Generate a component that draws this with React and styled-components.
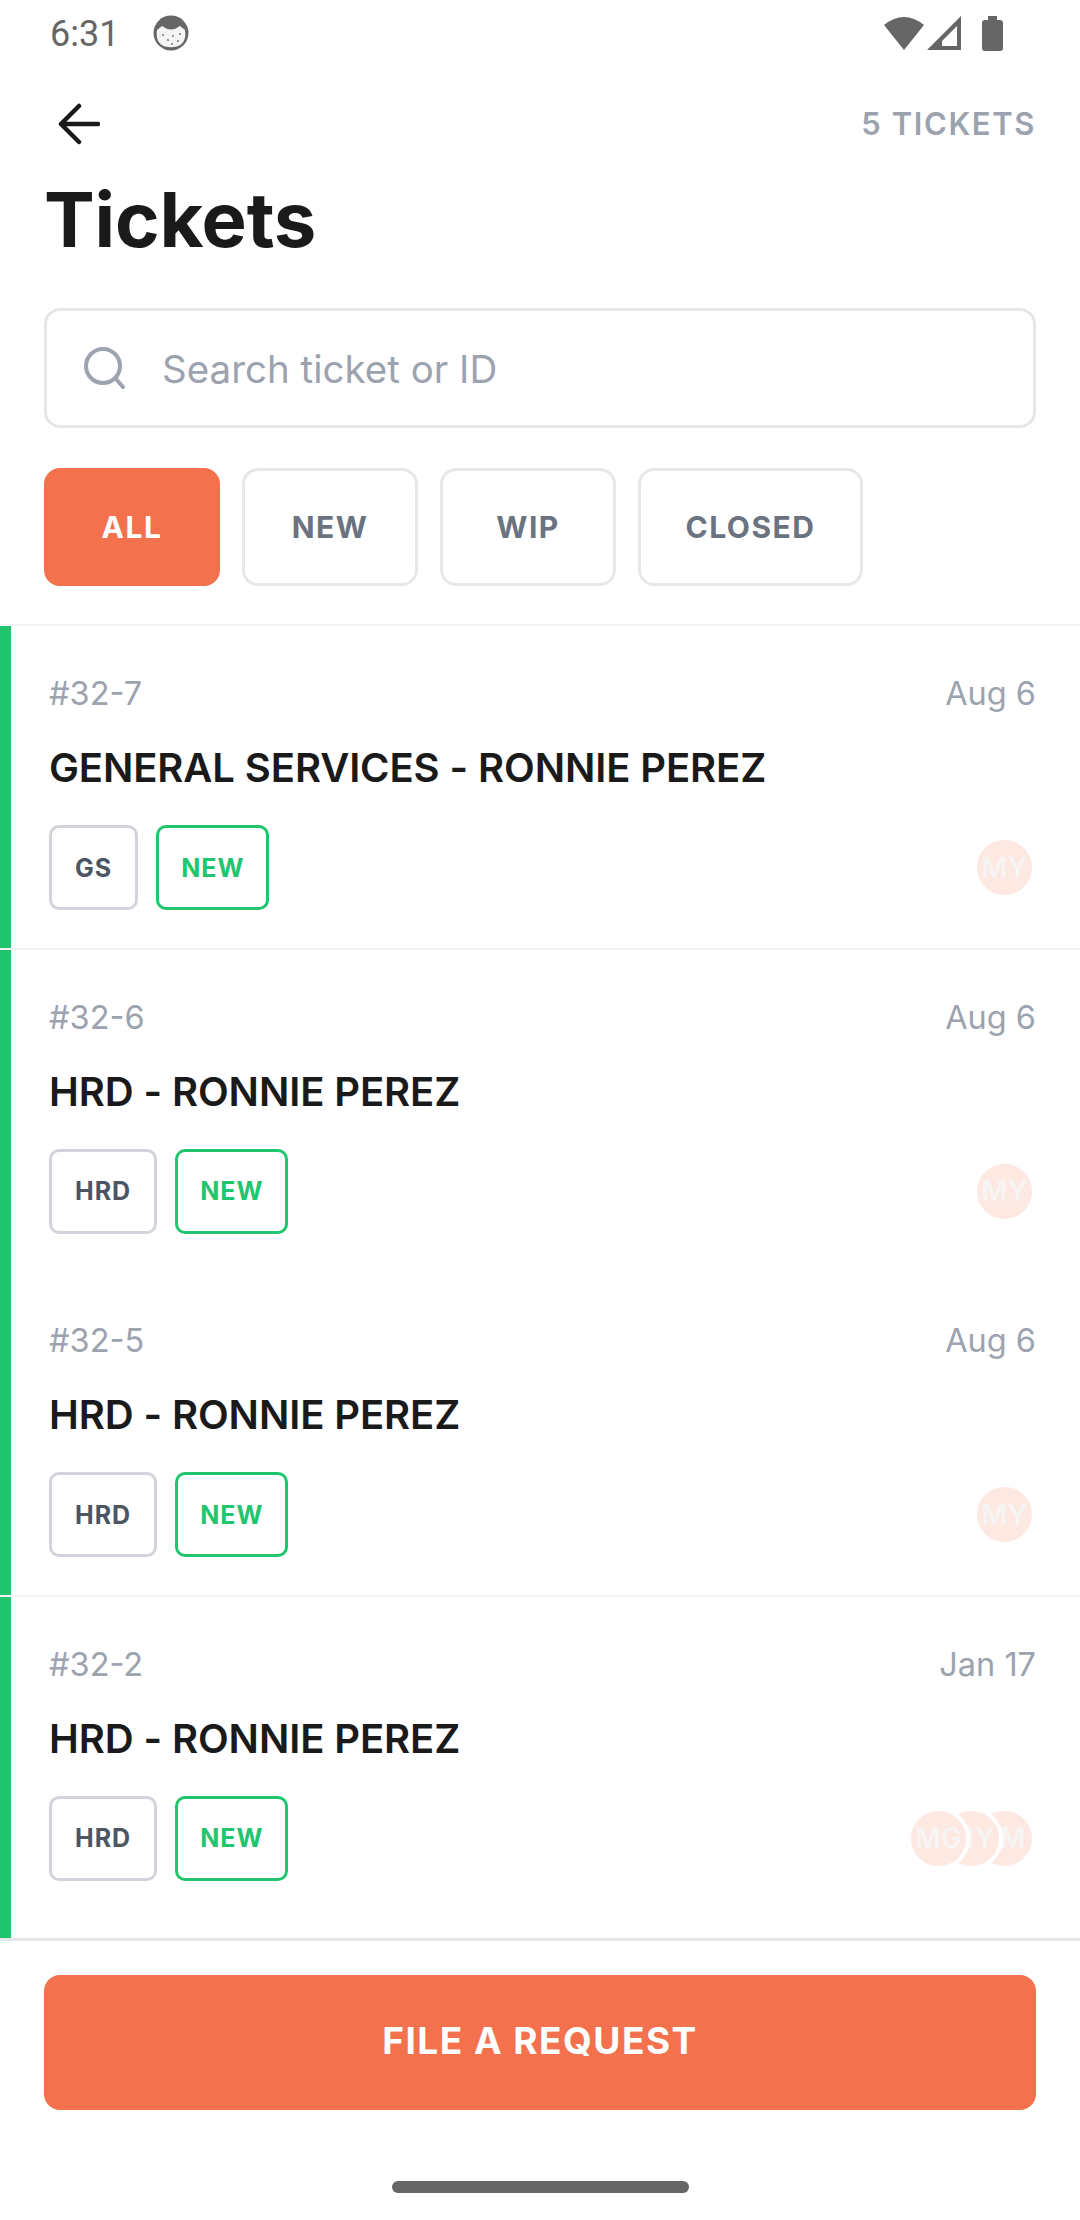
import React from "react";
import styled, { createGlobalStyle } from "styled-components";

const ORANGE = "#f3714d";
const GREEN = "#20c56d";

const tickets = [
  { id: "#32-7", date: "Aug 6", title: "GENERAL SERVICES - RONNIE PEREZ", dept: "GS", people: ["MY"] },
  { id: "#32-6", date: "Aug 6", title: "HRD - RONNIE PEREZ", dept: "HRD", people: ["MY"], divider: true },
  { id: "#32-5", date: "Aug 6", title: "HRD - RONNIE PEREZ", dept: "HRD", people: ["MY"] },
  { id: "#32-2", date: "Jan 17", title: "HRD - RONNIE PEREZ", dept: "HRD", people: ["MG", "MY", "JM"], divider: true },
];

export default function App() {
  return (
    <Page>
      <GlobalStyle />
      <StatusBar>
        <Time>6:31</Time>
        <svg width="36" height="36" viewBox="0 0 36 36">
          <circle cx="18" cy="18" r="17.5" fill="#666" />
          <path d="M4 15 L9 11 Q18 18 27 11 L32 15 Q34 28 24 31.5 Q18 33 12 31.5 Q2 28 4 15Z" fill="#f4f4f4" />
          <g fill="#777">
            <circle cx="10" cy="20" r="1" />
            <circle cx="15" cy="25" r="1" />
            <circle cx="20" cy="21" r="1" />
            <circle cx="25" cy="26" r="1" />
            <circle cx="27" cy="19" r="1" />
            <circle cx="19" cy="29" r="1" />
          </g>
        </svg>
        <StatusIcons>
          <svg width="40" height="36" viewBox="0 0 40 36">
            <path d="M0 10 Q20 -6 40 10 L20 35Z" fill="#666" />
          </svg>
          <svg width="35" height="36" viewBox="0 0 35 36">
            <path fillRule="evenodd" d="M0 35 L34 1 V35Z M15 31 H30 V11 L15 26Z" fill="#666" />
          </svg>
          <Battery />
        </StatusIcons>
      </StatusBar>

      <Header>
        <svg width="44" height="44" viewBox="0 0 44 44" fill="none" stroke="#1a1a1a" strokeWidth="4.5" strokeLinecap="round" strokeLinejoin="round">
          <path d="M42 22 H5 M23 4 L5 22 L23 40" />
        </svg>
        <Count>5 TICKETS</Count>
      </Header>
      <Title>Tickets</Title>

      <SearchBox>
        <svg width="42" height="42" viewBox="0 0 42 42" fill="none" stroke="#9ca3af" strokeWidth="4" strokeLinecap="round">
          <circle cx="19" cy="19" r="17" />
          <path d="M32 32 L39 40" />
        </svg>
        <Placeholder>Search ticket or ID</Placeholder>
      </SearchBox>

      <Filters>
        <Filter $active>ALL</Filter>
        <Filter>NEW</Filter>
        <Filter>WIP</Filter>
        <Filter $wide>CLOSED</Filter>
      </Filters>

      <List>
        {tickets.map((t, i) => (
          <Row key={t.id} $divider={i === 0 || t.divider}>
            <RowBody $divider={i === 0 || t.divider}>
              <Meta>
                <span>{t.id}</span>
                <span>{t.date}</span>
              </Meta>
              <RowTitle>{t.title}</RowTitle>
              <TagRow>
                <Tag>{t.dept}</Tag>
                <Tag $status>NEW</Tag>
                <Avatars>
                  {t.people.map((p, n) => (
                    <Avatar key={p} $z={t.people.length - n}>
                      <span>{p}</span>
                    </Avatar>
                  ))}
                </Avatars>
              </TagRow>
            </RowBody>
          </Row>
        ))}
      </List>

      <Footer>
        <RequestButton>FILE A REQUEST</RequestButton>
        <HomeBar />
      </Footer>
    </Page>
  );
}

const GlobalStyle = createGlobalStyle`
  html, body {
    margin: 0;
    padding: 0;
    background: #fff;
  }
  * {
    box-sizing: border-box;
  }
`;

const Page = styled.div`
  width: 1080px;
  height: 2220px;
  overflow: hidden;
  background: #fff;
  display: flex;
  flex-direction: column;
  font-family: Inter, "Liberation Sans", sans-serif;
`;

const StatusBar = styled.div`
  height: 66px;
  padding: 15px 77px 15px 50px;
  display: flex;
  align-items: center;
  gap: 34px;
`;

const Time = styled.div`
  font-family: Roboto, sans-serif;
  font-size: 36px;
  line-height: 38px;
  padding-top: 2px;
  color: #666;
`;

const StatusIcons = styled.div`
  margin-left: auto;
  display: flex;
  align-items: center;
  gap: 3px;
`;

const Battery = styled.div`
  width: 21px;
  height: 31px;
  margin: 4px 0 0 17px;
  background: #666;
  border-radius: 3px;
  position: relative;

  &::before {
    content: "";
    position: absolute;
    top: -4px;
    left: 6px;
    width: 9px;
    height: 4px;
    background: #666;
  }
`;

const Header = styled.div`
  margin-top: 36px;
  padding: 0 44px 0 56px;
  height: 44px;
  display: flex;
  justify-content: space-between;
  align-items: center;
`;

const Count = styled.div`
  font-size: 31px;
  font-weight: 600;
  letter-spacing: 1.6px;
  padding-bottom: 2px;
  color: #9ca3af;
`;

const Title = styled.h1`
  margin: 33px 0 0;
  padding: 0 44px;
  font-size: 76px;
  line-height: 80px;
  font-weight: 700;
  letter-spacing: -0.2px;
  color: #1a1a1a;
`;

const SearchBox = styled.div`
  margin: 49px 44px 0;
  height: 120px;
  border: 3px solid #e5e7eb;
  border-radius: 16px;
  padding: 0 37px;
  display: flex;
  align-items: center;
  gap: 36px;
`;

const Placeholder = styled.div`
  font-size: 38.5px;
  padding-top: 2px;
  color: #9ca3af;
`;

const Filters = styled.div`
  margin: 40px 44px 38px;
  display: flex;
  gap: 22px;
`;

const Filter = styled.div`
  width: ${(p) => (p.$wide ? "225px" : "176px")};
  height: 118px;
  border-radius: 16px;
  border: 3px solid ${(p) => (p.$active ? ORANGE : "#e5e7eb")};
  background: ${(p) => (p.$active ? ORANGE : "#fff")};
  color: ${(p) => (p.$active ? "#fff" : "#6b7280")};
  font-size: 30px;
  font-weight: 700;
  letter-spacing: 1.5px;
  display: flex;
  align-items: center;
  justify-content: center;
`;

const List = styled.div`
  flex: 1;
  min-height: 0;
  overflow: hidden;
`;

const Row = styled.div`
  height: 323.5px;
  border-top: ${(p) => (p.$divider ? "2px solid #f3f4f6" : "none")};

  &:last-child {
    height: 343px;
  }
`;

const RowBody = styled.div`
  height: 100%;
  border-left: 11px solid ${GREEN};
  padding: ${(p) => (p.$divider ? "46px" : "48px")} 44px 0 38px;
`;

const Meta = styled.div`
  display: flex;
  justify-content: space-between;
  font-size: 32.5px;
  line-height: 44px;
  color: #9ca3af;
`;

const RowTitle = styled.div`
  margin-top: 28px;
  font-size: 40px;
  line-height: 48px;
  font-weight: 600;
  letter-spacing: -0.1px;
  color: #1a1a1a;
`;

const TagRow = styled.div`
  margin-top: 33px;
  display: flex;
  align-items: center;
  gap: 18px;
`;

const Tag = styled.div`
  height: 85px;
  padding: 0 ${(p) => (p.$status ? "22px" : "23px")};
  border-radius: 10px;
  border: 3px solid ${(p) => (p.$status ? GREEN : "#d1d5db")};
  color: ${(p) => (p.$status ? GREEN : "#4b5563")};
  font-size: 25px;
  font-weight: 700;
  letter-spacing: 1px;
  display: flex;
  align-items: center;
`;

const Avatars = styled.div`
  margin-left: auto;
  display: flex;
`;

const Avatar = styled.div`
  position: relative;
  z-index: ${(p) => p.$z};
  width: 63px;
  height: 63px;
  border: 4px solid #fff;
  border-radius: 50%;
  background: #fde8e2;
  color: #f7f5f4;
  overflow: hidden;
  display: flex;
  align-items: center;
  justify-content: center;
  font-size: 28px;
  font-weight: 600;
  white-space: nowrap;

  & + & {
    margin-left: -30px;
  }
`;

const Footer = styled.div`
  height: 282px;
  border-top: 3px solid #e5e7eb;
  padding: 34px 44px 0;
  display: flex;
  flex-direction: column;
  align-items: center;
`;

const RequestButton = styled.div`
  width: 100%;
  height: 135px;
  padding-bottom: 4px;
  border-radius: 16px;
  background: ${ORANGE};
  color: #fff;
  font-size: 37px;
  font-weight: 700;
  letter-spacing: 1.5px;
  display: flex;
  align-items: center;
  justify-content: center;
`;

const HomeBar = styled.div`
  margin-top: 71px;
  width: 297px;
  height: 12px;
  border-radius: 6px;
  background: #666;
`;
